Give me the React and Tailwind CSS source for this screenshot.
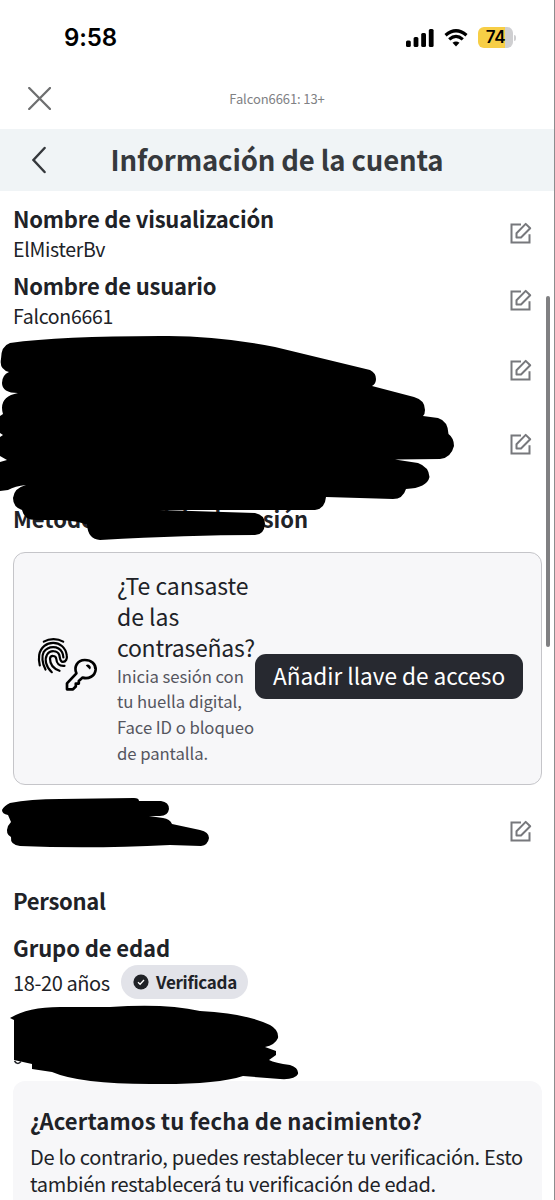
import { Fragment } from "react";

function EditIcon() {
  return (
    <svg className="h-[24px] w-[24px] shrink-0" viewBox="0 0 24 24" fill="none">
      <path
        d="M12 3.500H2.500V21.500H20.500V13.200"
        stroke="#77787c"
        strokeWidth="2"
      />
      <path
        d="M16.700 2.900L21.200 7.300L12 16.500H7.500V12.200Z"
        stroke="#77787c"
        strokeWidth="2"
        strokeLinejoin="round"
      />
    </svg>
  );
}

function StatusBar() {
  return (
    <div className="flex h-[75px] items-center justify-between pl-[64px] pr-[38px]">
      <span className="font-[Inter,sans-serif] text-[24px] font-semibold leading-none tracking-[-0.1px] text-black">
        9:58
      </span>
      <div className="flex items-center gap-[10px]">
        <svg className="h-[18px] w-[28px]" viewBox="0 0 28 18">
          <rect x="0" y="11.5" width="4.8" height="6.5" rx="1.5" />
          <rect x="7.6" y="8" width="4.8" height="10" rx="1.5" />
          <rect x="15.2" y="4" width="4.8" height="14" rx="1.5" />
          <rect x="22.8" y="0" width="4.8" height="18" rx="1.5" />
        </svg>
        <svg className="h-[18px] w-[24px]" viewBox="0 0 23 18" fill="none">
          <path d="M1 6.200Q11.500-2.700 22 6.200" stroke="#000" strokeWidth="3.200" />
          <path d="M4.700 10.400Q11.500 4.400 18.300 10.400" stroke="#000" strokeWidth="3.200" />
          <path d="M8 13.800Q11.500 11 15 13.800L11.500 17.400Z" fill="#000" />
        </svg>
        <div className="flex items-center gap-[1px]">
          <div className="flex h-[21px] w-[35px] items-center justify-center rounded-[6px] bg-linear-to-r from-[#f7ce46] from-78% to-[#cfcfd1] to-78% font-[Inter,sans-serif] text-[17px] font-semibold leading-none tracking-[-0.4px] text-black">
            74
          </div>
          <div className="h-[6px] w-[2px] rounded-r-full bg-[#cfcfd1]" />
        </div>
      </div>
    </div>
  );
}

function Field({ title, value, height }) {
  return (
    <div className={`flex justify-between ${height}`}>
      <div>
        <div className="text-[22px] font-bold leading-[28px] tracking-[-0.2px]">
          {title}
        </div>
        <div className="text-[19.500px] leading-[33px] tracking-[-0.300px]">
          {value}
        </div>
      </div>
      <div className="flex h-[58px] items-center">
        <EditIcon />
      </div>
    </div>
  );
}

function PasskeyIcon() {
  return (
    <svg
      className="mb-[7px] h-[56px] w-[62px] shrink-0"
      viewBox="0 0 62 56"
      fill="none"
      stroke="#000"
      strokeWidth="2.200"
      strokeLinecap="round"
      strokeLinejoin="round"
    >
      <path d="M6.800 4.600C12.500 1.200 20.500 1.200 26.200 4.600" />
      <path d="M14.800 35.200C8.500 29.500 7.500 22 10 17.800C13 12.800 20.500 13.200 22.300 18C23 20.500 22.800 24.700 25.800 24.900C29 25 30.300 21.500 29.800 18.500C27.500 1.500 5 2 2.200 18C1.600 22 1.800 25 2.800 28.500" />
      <path d="M8.500 32.500C5 26 4.600 19 6.600 15.200C11 8.300 21.500 8.300 25.100 15.200Q26.300 17.500 26.400 20.500" />
      <path d="M22.500 33.800C16 31.500 13 27 13 21.800C13.200 18 18.900 18 19.300 22C19.600 26.500 22 29.300 27.500 28.800" />
      <g transform="translate(29 22)" strokeWidth="2.700">
        <path d="M10.400 14.300C7.600 8 11.400 1 18.800 1C25.400 1 30 5.200 29.600 10.900C29 17.100 22.500 20.400 16.600 18.600L12.800 21.900V24.600H9.800V27.500L7 30.300H1V24.400Z" />
        <path d="M19.800 6.600A2.300 2.300 0 1 1 23.800 10.600Z" fill="#000" stroke="none" />
      </g>
    </svg>
  );
}

function PasskeyCard() {
  return (
    <div className="flex h-[233px] w-[529px] items-center rounded-[12px] border-[1.5px] border-[#c5c5c9] bg-[#f7f7f9] pl-[23px] pr-[17px]">
      <PasskeyIcon />
      <div className="mb-[1px] ml-[18px] w-[138px] shrink-0 whitespace-nowrap">
        <div className="text-[23px] leading-[31px] tracking-[-0.05px]">
          ¿Te cansaste
          <br />
          de las
          <br />
          <span className="tracking-[-0.25px]">contraseñas?</span>
        </div>
        <div className="mt-[1px] text-[16.700px] leading-[25.600px] tracking-[-0.060px] text-[#55565f]">
          Inicia sesión con
          <br />
          tu huella digital,
          <br />
          Face ID o bloqueo
          <br />
          de pantalla.
        </div>
      </div>
      <button className="mt-[16px] h-[45px] w-[268px] shrink-0 whitespace-nowrap rounded-[11px] bg-[#272930] text-[22.600px] leading-none text-white">
        Añadir llave de acceso
      </button>
    </div>
  );
}

function Scribbles() {
  return (
    <svg
      className="pointer-events-none absolute left-0 top-0 h-[1200px] w-[555px]"
      viewBox="0 0 555 1200"
    >
      <path d="M10 343Q60 336 160 336Q215 335 275 347L370 370Q376 373 376 379Q376 384 372 386L414 397Q425 400 425 410Q425 414 423 416L438 418Q448 421 448.500 434Q454 438 454 446Q451 458 440 459L395 459.500L418 463Q429 467 429.500 477Q427 488 406 489Q403 499 393 499L326 497Q325 509 315 510H160L255 513Q265 515 265 524Q264 535 255 535Q190 535 100 540Q88 539 87 525Q80 521 60 520H36Q24 520 22 510Q13 507 13 498Q14 488 26 485Q15 486 8 490L0 491V462L7 460L0 456V437L3 435L0 433V416L3 414Q-2 397 18 393Q2 393 2 383Q2 375 9 372Q-1 369 1 359Q1 346 10 343Z" />
      <path d="M10 803Q30 799 60 799L134 798Q139 798 139 801H161Q169 802 169 809Q168 816 160 816H149L163 818Q170 819 172 824L200 830Q209 832 209 838Q208 845 201 846L170 845Q90 849 20 846Q10 845 11 837Q5 834 8 826L11 822L8 815Q2 814 2 810Q4 806 10 803Z" />
      <path d="M10 1018Q28 1007 60 1007L110 1007Q165 1003 200 1011Q245 1013 270 1025Q279 1030 278 1038Q275 1045 265 1047L276 1051V1055L269 1060Q275 1063 290 1065Q299 1068 298 1074Q295 1080 280 1079L243 1076Q215 1085 150 1084Q80 1084 52 1072L32 1069V1064L14 1060V1020Z" />
      <path
        d="M14.500 1061Q17.500 1065.500 21 1061.500"
        fill="none"
        stroke="#202227"
        strokeWidth="1.500"
      />
    </svg>
  );
}

export default function App() {
  return (
    <Fragment>
      <div className="relative h-[1200px] w-[555px] overflow-hidden border-r border-[#8c8c8e] bg-white font-['Noto_Sans_CJK_JP','Noto_Sans',sans-serif] text-[#202227]">
        <StatusBar />
        <div className="flex h-[54px] items-center px-[28px] pb-[7px]">
          <svg className="h-[23px] w-[23px]" viewBox="0 0 23 23" fill="none">
            <path
              d="M1.200 1L22 22M22 1L1.200 22"
              stroke="#6e6f70"
              strokeWidth="2.300"
              strokeLinecap="round"
            />
          </svg>
          <div className="mr-[23px] flex-1 text-center text-[13px] leading-none tracking-[-0.100px] text-[#808184]">
            Falcon6661: 13+
          </div>
        </div>
        <div className="flex h-[62px] items-center bg-[#f0f4f6] px-[32px]">
          <svg className="h-[28px] w-[14px]" viewBox="0 0 14 28" fill="none">
            <path
              d="M12.600 2L1.500 14L12.600 26"
              stroke="#35383c"
              strokeWidth="2.400"
              strokeLinecap="round"
            />
          </svg>
          <h1 className="mr-[14px] flex-1 whitespace-nowrap text-center text-[27.500px] font-bold leading-none tracking-[-0.150px] text-[#36393d]">
            Información de la cuenta
          </h1>
        </div>

        <div className="pl-[13px] pr-[21px] pt-[13px]">
          <Field
            title="Nombre de visualización"
            value="ElMisterBv"
            height="h-[67px]"
          />
          <Field
            title="Nombre de usuario"
            value="Falcon6661"
            height="h-[70px]"
          />
          <Field height="h-[74px]" />
          <Field height="h-[90px]" />
          <div className="h-[47px] text-[22px] font-bold leading-[27px]">
            Métodos de inicio de sesión
          </div>
        </div>

        <div className="pl-[13px]">
          <PasskeyCard />
        </div>

        <div className="flex h-[93px] justify-end pr-[21px] pt-[34px]">
          <EditIcon />
        </div>

        <div className="px-[13px]">
          <h2 className="h-[47px] text-[22px] font-bold leading-[45px] tracking-[-0.300px]">
            Personal
          </h2>
          <h2 className="h-[40px] text-[22px] font-bold leading-[45px] tracking-[-0.100px]">
            Grupo de edad
          </h2>
          <div className="flex h-[34px] items-center gap-[11px]">
            <span className="w-[97px] whitespace-nowrap pt-[2px] text-[20px] leading-none tracking-[-0.400px]">
              18-20 años
            </span>
            <div className="flex h-[34px] w-[127px] items-center gap-[7px] rounded-full bg-[#e2e3e9] pl-[12px]">
              <svg className="h-[16px] w-[16px]" viewBox="0 0 16 16">
                <circle cx="8" cy="8" r="7.600" fill="#202227" />
                <path
                  d="M5 8.300L7.100 10.300L11 6"
                  fill="none"
                  stroke="#fff"
                  strokeWidth="1.300"
                />
              </svg>
              <span className="pb-[2px] text-[17px] font-bold leading-none tracking-[-0.300px]">
                Verificada
              </span>
            </div>
          </div>
        </div>

        <div className="ml-[13px] mt-[82px] h-[140px] w-[529px] rounded-[12px] bg-[#f7f7f9] pl-[17px] pt-[23px]">
          <h3 className="text-[22px] font-bold leading-[32px] tracking-[0.150px]">
            ¿Acertamos tu fecha de nacimiento?
          </h3>
          <p className="mt-[7px] whitespace-nowrap text-[20px] leading-[27px] tracking-[-0.300px]">
            De lo contrario, puedes restablecer tu verificación. Esto
            <br />
            <span className="tracking-[-0.280px]">
              también restablecerá tu verificación de edad.
            </span>
          </p>
        </div>

        <Scribbles />
        <div className="absolute left-[546px] top-[296px] h-[351px] w-[4px] rounded-full bg-[#808082]" />
      </div>
    </Fragment>
  );
}
